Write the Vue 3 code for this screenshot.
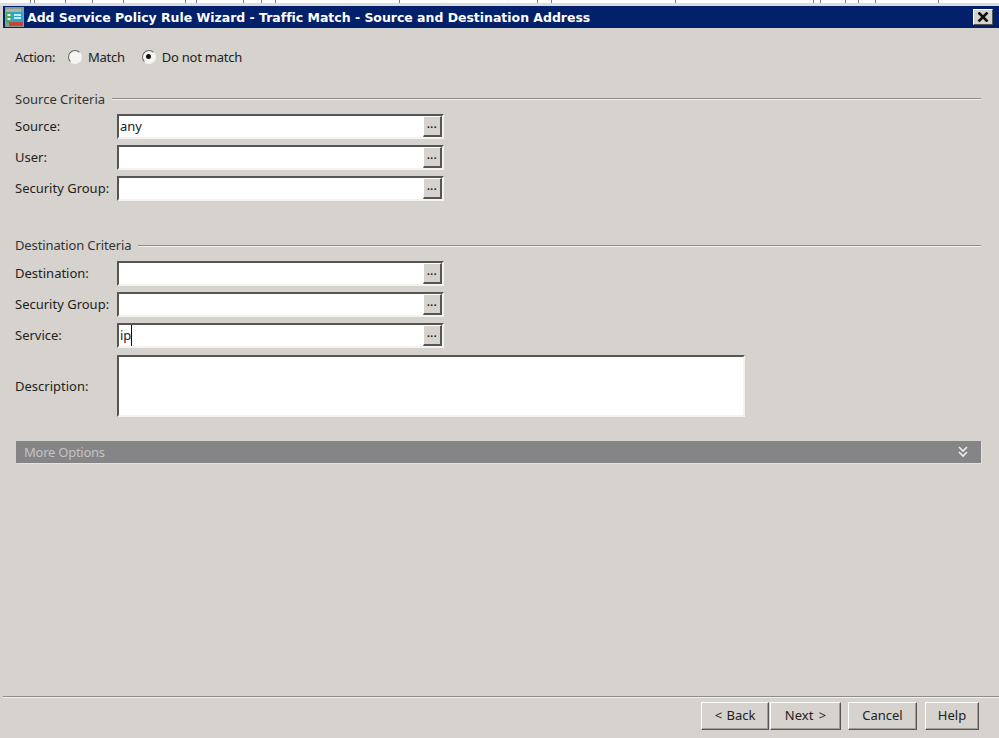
<script setup>
const sourceRows = [
  { label: 'Source:', value: 'any' },
  { label: 'User:', value: '' },
  { label: 'Security Group:', value: '' },
]
const destRows = [
  { label: 'Destination:', value: '' },
  { label: 'Security Group:', value: '' },
  { label: 'Service:', value: 'ip', caret: true },
]
const ticks = [30, 34, 65, 92, 123, 185, 196, 243, 261, 275, 399, 537, 551, 675, 813, 820, 845, 858, 875, 938]
</script>

<template>
  <div class="screen">
    <div class="strip">
      <i v-for="t in ticks" :key="t" class="tick" :style="{ left: t + 'px' }"></i>
    </div>
    <div class="titlebar">
      <svg class="appicon" width="19" height="20" viewBox="0 0 19 20">
        <rect x="0" y="0" width="19" height="20" fill="#8d9a94" />
        <rect x="1" y="2" width="15" height="3" fill="#aab4ae" />
        <rect x="1" y="5" width="6" height="11" fill="#4fa765" />
        <rect x="2.5" y="7" width="3" height="2" fill="#e8f2e8" />
        <rect x="2.5" y="11" width="3" height="2" fill="#e8f2e8" />
        <rect x="7" y="5" width="11" height="10" fill="#2aa7c9" />
        <path d="M9 8h7M9 11h7" stroke="#fff" stroke-width="1.4" />
        <rect x="4" y="15" width="14" height="4" fill="#c4453c" />
      </svg>
      <span class="title">Add Service Policy Rule Wizard - Traffic Match - Source and Destination Address</span>
      <span class="close">
        <svg width="12" height="10" viewBox="0 0 12 10"><path d="M1.5 0.5l9 9M10.5 0.5l-9 9" stroke="#111" stroke-width="2.6" /></svg>
      </span>
    </div>

    <div class="body">
      <div class="action">
        <span class="action-label">Action:</span>
        <span class="radio"></span><span class="radio-text match">Match</span>
        <span class="radio on"></span><span class="radio-text">Do not match</span>
      </div>

      <div class="legend first"><span>Source Criteria</span><i></i></div>
      <div class="rows">
        <div v-for="r in sourceRows" :key="r.label" class="row">
          <label>{{ r.label }}</label>
          <div class="field"><span class="val" >{{ r.value }}</span><span class="dots">...</span></div>
        </div>
      </div>

      <div class="legend second"><span>Destination Criteria</span><i></i></div>
      <div class="rows dest">
        <div v-for="r in destRows" :key="r.label" class="row">
          <label>{{ r.label }}</label>
          <div class="field"><span class="val" :class="{ caret: r.caret }">{{ r.value }}</span><span class="dots">...</span></div>
        </div>
      </div>
      <div class="desc">
        <label>Description:</label>
        <div class="area"></div>
      </div>

      <div class="more">
        <span>More Options</span>
        <svg width="10" height="12" viewBox="0 0 10 12"><path d="M1 1l4 4 4-4M1 6l4 4 4-4" fill="none" stroke="#f0f0ee" stroke-width="1.6" /></svg>
      </div>
    </div>

    <div class="footer">
      <div class="buttons">
        <button class="btn back">&lt; Back</button>
        <button class="btn next">Next &gt;</button>
        <button class="btn cancel">Cancel</button>
        <button class="btn help">Help</button>
      </div>
    </div>
  </div>
</template>

<style>
html, body { margin: 0; background: #d6d3ce; }
</style>

<style scoped>
.screen {
  width: 999px;
  height: 738px;
  display: flex;
  flex-direction: column;
  overflow: hidden;
  background: #d6d3ce;
  color: #222;
  font-family: "Noto Sans", "Liberation Sans", sans-serif;
  font-size: 13px;
}
.strip {
  position: relative;
  height: 6px;
  flex: none;
  background: linear-gradient(#fff 0 3px, #d9dae2 3px 6px);
}
.tick { position: absolute; top: 0; width: 1px; height: 3px; background: #7d7d88; }
.titlebar {
  flex: none;
  height: 22px;
  margin-left: 3px;
  background: #03216b;
  display: flex;
  align-items: center;
  padding-left: 2px;
  padding-right: 6px;
}
.appicon { flex: none; }
.title {
  margin-left: 3px;
  color: #fff;
  font-family: "DejaVu Sans", sans-serif;
  font-weight: 700;
  font-size: 12.5px;
  letter-spacing: -0.025px;
  white-space: nowrap;
  flex: 1;
}
.close {
  width: 20px;
  height: 16px;
  background: #d6d3ce;
  border: 1px solid;
  border-color: #fff #555 #555 #fff;
  box-sizing: border-box;
  display: flex;
  align-items: center;
  justify-content: center;
}
.body { flex: 1; padding: 0 18px 0 15px; display: flex; flex-direction: column; }
.action { display: flex; align-items: center; height: 16px; margin-top: 21px; letter-spacing: -0.25px; }
.action-label { width: 53px; }
.radio {
  width: 14px;
  height: 14px;
  box-sizing: border-box;
  border-radius: 50%;
  background: #f6f5f3;
  border: 1.5px solid;
  border-color: #666 #f4f3f0 #f4f3f0 #666;
  display: inline-block;
  position: relative;
}
.radio.on::after {
  content: "";
  position: absolute;
  left: 3px;
  top: 3px;
  width: 5px;
  height: 5px;
  border-radius: 50%;
  background: #111;
}
.radio-text { margin-left: 6px; }
.radio-text.match { margin-right: 17px; }
.legend { display: flex; align-items: center; gap: 7px; height: 16px; color: #333; }
.legend i { flex: 1; height: 1px; background: #8e8c88; border-bottom: 1px solid #f2f1ee; }
.legend.first { margin-top: 26px; }
.legend.second { margin-top: 37px; letter-spacing: -0.12px; }
.legend.second span { margin-bottom: 2px; }
.rows { display: flex; flex-direction: column; gap: 6px; margin-top: 7px; }
.rows.dest { margin-top: 7px; }
.row { display: flex; align-items: center; height: 25px; }
.row label, .desc label { width: 102px; flex: none; }
.row label { margin-bottom: 2px; }
.field {
  width: 327px;
  height: 25px;
  box-sizing: border-box;
  background: #fff;
  border: 2px solid;
  border-color: #555 #f4f3f0 #f4f3f0 #555;
  display: flex;
  align-items: stretch;
  justify-content: space-between;
}
.val { padding-left: 1px; line-height: 21px; height: 21px; }
.caret { border-right: 1px solid #111; }
.dots {
  width: 19px;
  box-sizing: border-box;
  background: #d6d3ce;
  border: solid;
  border-width: 1px 2px 2px 1px;
  border-color: #fff #555 #555 #fff;
  font-size: 10px;
  font-weight: 700;
  letter-spacing: 0.5px;
  text-align: center;
  line-height: 14px;
  color: #111;
}
.desc { display: flex; align-items: center; margin-top: 7px; }
.area {
  width: 628px;
  height: 62px;
  box-sizing: border-box;
  background: #fff;
  border: 2px solid;
  border-color: #555 #f4f3f0 #f4f3f0 #555;
}
.more {
  margin-top: 24px;
  margin-left: 1px;
  height: 22px;
  background: #858487;
  color: #c4c3c4;
  letter-spacing: -0.25px;
  display: flex;
  align-items: center;
  justify-content: space-between;
  padding: 0 13px 0 8px;
  box-shadow: 1px 1px 0 #e4e2de;
}
.footer {
  flex: none;
  height: 41px;
  margin-left: 3px;
  border-top: 1px solid #8e8c88;
  box-shadow: inset 0 1px 0 #f2f1ee;
  display: flex;
  justify-content: flex-end;
  padding-right: 20px;
}
.buttons { display: flex; align-items: flex-start; padding-top: 5px; }
.btn {
  height: 28px;
  box-sizing: border-box;
  background: #d6d3ce;
  border: 1px solid;
  border-color: #fff #555 #555 #fff;
  box-shadow: inset -1px -1px 0 #a09e9a;
  font: inherit;
  color: #222;
  padding: 0 0 2px;
}
.back { width: 68px; word-spacing: 1px; }
.next { width: 71px; margin-left: 1px; word-spacing: 2px; }
.cancel { width: 69px; margin-left: 7px; }
.help { width: 54px; margin-left: 8px; }
</style>
